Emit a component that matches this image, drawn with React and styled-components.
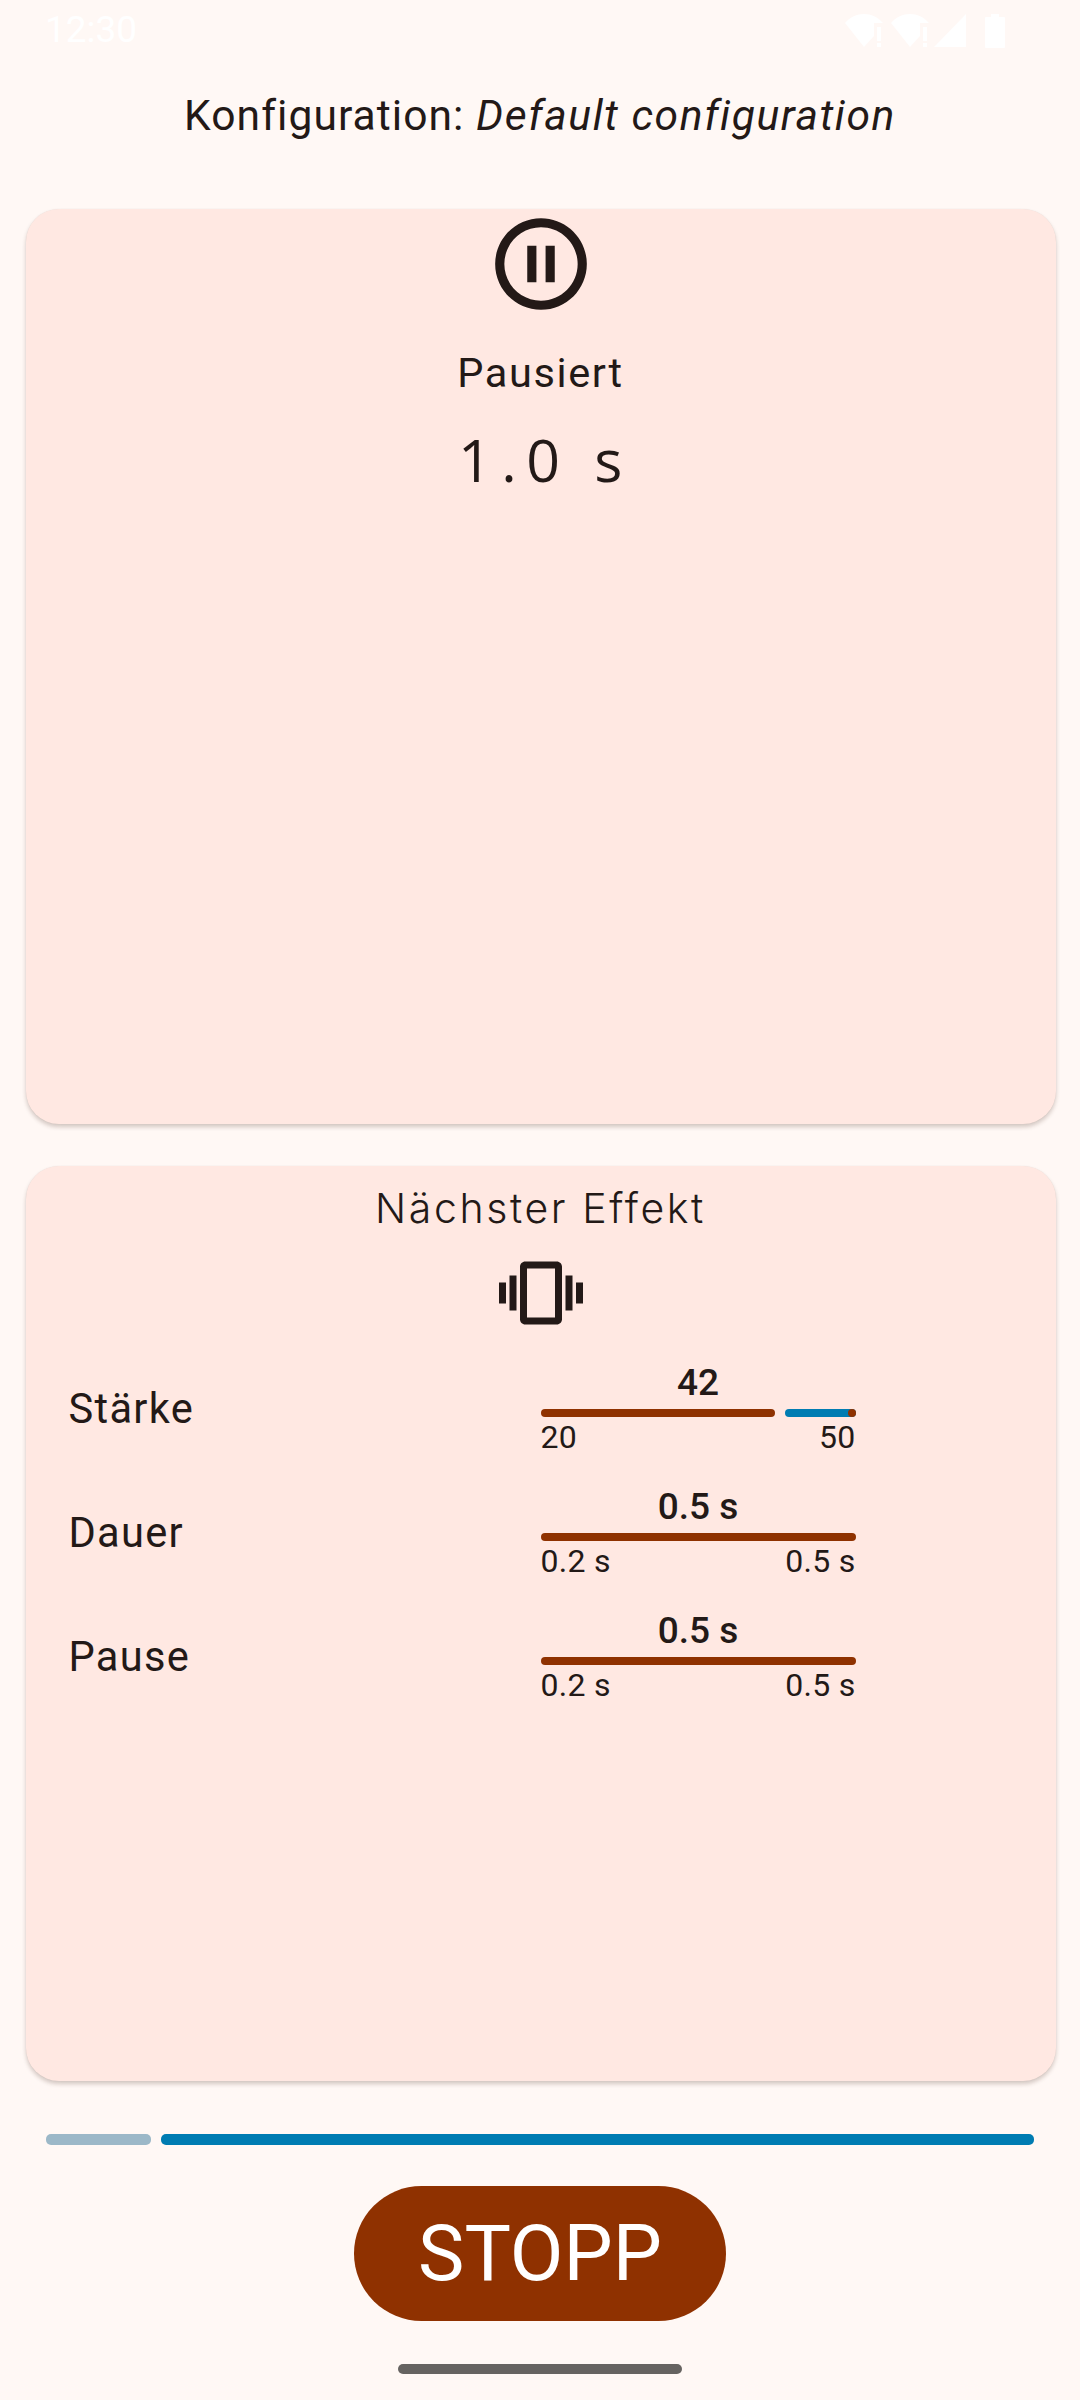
import React from "react";
import styled, { createGlobalStyle } from "styled-components";

const GlobalStyle = createGlobalStyle`
  html, body {
    margin: 0;
    padding: 0;
    background: #fff8f5;
  }
`;

const Page = styled.div`
  width: 1080px;
  height: 2400px;
  display: flex;
  flex-direction: column;
  align-items: center;
  background: #fff8f5;
  color: #231917;
  font-family: Roboto, sans-serif;
  overflow: hidden;
`;

const StatusBar = styled.div`
  width: 100%;
  height: 63px;
  box-sizing: border-box;
  padding: 8px 75px 0 45px;
  display: flex;
  justify-content: space-between;
  align-items: flex-start;
  color: #ffffff;
  font-size: 37px;
  line-height: 44px;
`;

const StatusIcons = styled.svg`
  display: block;
  margin-top: 6px;
`;

const Heading = styled.div`
  padding: 22px 0 64px;
  font-size: 42.6px;
  line-height: 60px;
  letter-spacing: 1.05px;
  text-align: center;
  em {
    letter-spacing: 1.58px;
  }
`;

const Card = styled.section`
  width: 1030px;
  height: ${(p) => p.$height}px;
  box-sizing: border-box;
  border-radius: 33px;
  background: #ffe8e2;
  box-shadow: 0 3px 4px rgba(60, 30, 20, 0.22), 0 0 1px rgba(60, 30, 20, 0.1);
  display: flex;
  flex-direction: column;
  align-items: center;
  align-self: flex-start;
  margin-left: 25.5px;
  margin-bottom: ${(p) => p.$gap}px;
  padding-top: ${(p) => p.$top}px;
`;

const Icon = styled.svg`
  display: block;
  flex: none;
  fill: #231917;
`;

const StateLabel = styled.div`
  margin-top: 24px;
  font-size: 41.5px;
  line-height: 60px;
  letter-spacing: 1.6px;
`;

const Countdown = styled.div`
  margin-top: 18px;
  padding-left: 9px;
  font-family: "Open Sans", sans-serif;
  font-weight: 400;
  font-size: 59px;
  line-height: 76px;
  letter-spacing: 9.5px;
  white-space: pre;
`;

const CardTitle = styled.div`
  margin-top: -2px;
  font-family: Inter, sans-serif;
  font-weight: 300;
  font-size: 41px;
  line-height: 60px;
  letter-spacing: 2.6px;
`;

const NextIcon = styled(Icon)`
  margin-top: 13px;
`;

const Rows = styled.div`
  align-self: stretch;
  margin-top: 25px;
  padding-left: 43px;
  display: flex;
  flex-direction: column;
  gap: 27px;
`;

const Row = styled.div`
  display: grid;
  grid-template-columns: 472px 315px;
  align-items: center;
`;

const RowLabel = styled.div`
  font-size: 41.6px;
  line-height: 50px;
  letter-spacing: 1.3px;
`;

const Slider = styled.div`
  display: flex;
  flex-direction: column;
`;

const Value = styled.div`
  height: 46px;
  margin-bottom: 3px;
  font-size: 37px;
  font-weight: 500;
  line-height: 46px;
  text-align: center;
`;

const Track = styled.div`
  height: 8px;
  display: flex;
  gap: 10px;
`;

const Active = styled.div`
  flex: 1;
  border-radius: 4px;
  background: #8f3100;
`;

const Rest = styled.div`
  width: 71px;
  border-radius: 4px;
  background: #007cb2;
  display: flex;
  justify-content: flex-end;
`;

const Stop = styled.div`
  width: 8px;
  height: 8px;
  border-radius: 50%;
  background: #8f3100;
`;

const Range = styled.div`
  display: flex;
  justify-content: space-between;
  font-size: 32px;
  line-height: 40px;
  letter-spacing: 0.3px;
`;

const Progress = styled.div`
  width: 988px;
  height: 11px;
  margin-top: 11px;
  display: flex;
  gap: 10px;
`;

const ProgressRest = styled.div`
  width: 105px;
  border-radius: 5px;
  background: #9cb8c8;
`;

const ProgressDone = styled.div`
  flex: 1;
  border-radius: 5px;
  background: #007cb2;
`;

const StopButton = styled.button`
  width: 372px;
  height: 135px;
  margin-top: 41px;
  padding: 0;
  border: 0;
  border-radius: 68px;
  background: #8f3100;
  color: #ffffff;
  font-family: Roboto, sans-serif;
  font-size: 78px;
`;

const HomeBar = styled.div`
  width: 284px;
  height: 10px;
  margin-top: 43px;
  border-radius: 5px;
  background: #666361;
`;

const wifi = (x) => (
  <g transform={`translate(${x} 0)`}>
    <path d="M0 9C5 3 12 0 19 0S33 3 38 9H29V22L19 33Z" />
    <path d="M32 13h4v14h-4zM32 29h4v4h-4z" />
  </g>
);

const rows = [
  { label: "Stärke", value: "42", min: "20", max: "50", rest: true },
  { label: "Dauer", value: "0.5 s", min: "0.2 s", max: "0.5 s" },
  { label: "Pause", value: "0.5 s", min: "0.2 s", max: "0.5 s" },
];

const App = () => {
  return (
    <Page>
      <GlobalStyle />
      <StatusBar>
        <span>12:30</span>
        <StatusIcons width="160" height="34" viewBox="0 0 160 34" fill="#ffffff">
          {wifi(0)}
          {wifi(46)}
          <path d="M121 0V33H89Z" />
          <path d="M140 4a1 1 0 0 1 1-1h5V0h8v3h5a1 1 0 0 1 1 1v29a1 1 0 0 1-1 1h-18a1 1 0 0 1-1-1Z" />
        </StatusIcons>
      </StatusBar>

      <Heading>
        Konfiguration: <em>Default configuration</em>
      </Heading>

      <Card $height={915} $gap={42} $top={0}>
        <Icon width="110" height="110" viewBox="0 0 24 24">
          <path d="M9 16h2V8H9v8zm3-14C6.48 2 2 6.48 2 12s4.48 10 10 10 10-4.48 10-10S17.52 2 12 2zm0 18c-4.41 0-8-3.59-8-8s3.59-8 8-8 8 3.59 8 8-3.59 8-8 8zm1-4h2V8h-2v8z" />
        </Icon>
        <StateLabel>Pausiert</StateLabel>
        <Countdown>1.0 s</Countdown>
      </Card>

      <Card $height={915} $gap={42} $top={14}>
        <CardTitle>Nächster Effekt</CardTitle>
        <NextIcon width="84" height="84" viewBox="0 0 24 24">
          <path d="M0 15h2V9H0v6zm3 2h2V7H3v10zm19-8v6h2V9h-2zm-3 8h2V7h-2v10zM16.5 3h-9C6.67 3 6 3.67 6 4.5v15c0 .83.67 1.5 1.5 1.5h9c.83 0 1.5-.67 1.5-1.5v-15c0-.83-.67-1.5-1.5-1.5zM16 19H8V5h8v14z" />
        </NextIcon>
        <Rows>
          {rows.map((row) => (
            <Row key={row.label}>
              <RowLabel>{row.label}</RowLabel>
              <Slider>
                <Value>{row.value}</Value>
                <Track>
                  <Active />
                  {row.rest && (
                    <Rest>
                      <Stop />
                    </Rest>
                  )}
                </Track>
                <Range>
                  <span>{row.min}</span>
                  <span>{row.max}</span>
                </Range>
              </Slider>
            </Row>
          ))}
        </Rows>
      </Card>

      <Progress>
        <ProgressRest />
        <ProgressDone />
      </Progress>
      <StopButton>STOPP</StopButton>
      <HomeBar />
    </Page>
  );
};

export default App;
